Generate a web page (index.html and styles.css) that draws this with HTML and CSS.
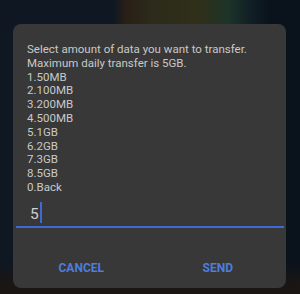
FILE: index.html
```html
<!DOCTYPE html>
<html lang="en">
<head>
    <meta charset="UTF-8">
    <meta name="viewport" content="width=device-width, initial-scale=1.0">
    <title>Data transfer</title>
    <link rel="stylesheet" href="styles.css">
</head>
<body>

<!-- USSD style dialog -->
<div class="dialog">
    <div class="message">
        Select amount of data you want to transfer.<br>
        Maximum daily transfer is 5GB.<br>
        1.50MB<br>
        2.100MB<br>
        3.200MB<br>
        4.500MB<br>
        5.1GB<br>
        6.2GB<br>
        7.3GB<br>
        8.5GB<br>
        0.Back
    </div>

    <div class="field">5<span class="caret"></span></div>

    <div class="actions">
        <a class="action">CANCEL</a>
        <a class="action">SEND</a>
    </div>
</div>

</body>
</html>
```

FILE: styles.css
```css
html, body {
    height: 100%;
}

body {
    margin: 0;
    font-family: Roboto, "Noto Sans", sans-serif;
    background-color: #0d1520;
    background-image:
        linear-gradient(to bottom, rgba(13, 21, 32, 0) 0, rgba(13, 21, 32, 0) 260px, #1b1614 286px),
        linear-gradient(to right, #0e1722 0, #0f1822 38%, #2a1f16 42%, #2c2a1a 50%, #302f19 66%, #1d3428 76%, #112026 83%, #0a121c 90%);
    overflow: hidden;
}

.dialog {
    display: flex;
    flex-direction: column;
    width: 273px;
    height: 264px;
    margin: 24px 0 0 13px;
    background-color: #383838;
    border-radius: 8px;
    box-sizing: border-box;
    padding-top: 19px;
}

.message {
    padding: 0 14px;
    font-size: 11.5px;
    line-height: 13.8px;
    color: #c9c9c9;
}

/* Input with the blue underline */
.field {
    margin: 7px 2px 0 3px;
    padding-left: 14px;
    font-size: 15.5px;
    line-height: 24px;
    color: #cfcfcf;
    border-bottom: 2px solid #3d6bd4;
}

.caret {
    display: inline-block;
    width: 2px;
    height: 21px;
    margin-left: 1px;
    vertical-align: -4px;
    background-color: #3d6bd4;
}

.actions {
    display: grid;
    grid-template-columns: 1fr 1fr;
    margin-top: auto;
    height: 40px;
}

.action {
    text-align: center;
    font-size: 12px;
    font-weight: 700;
    line-height: 40px;
    color: #4c7ddf;
    cursor: pointer;
}
```
